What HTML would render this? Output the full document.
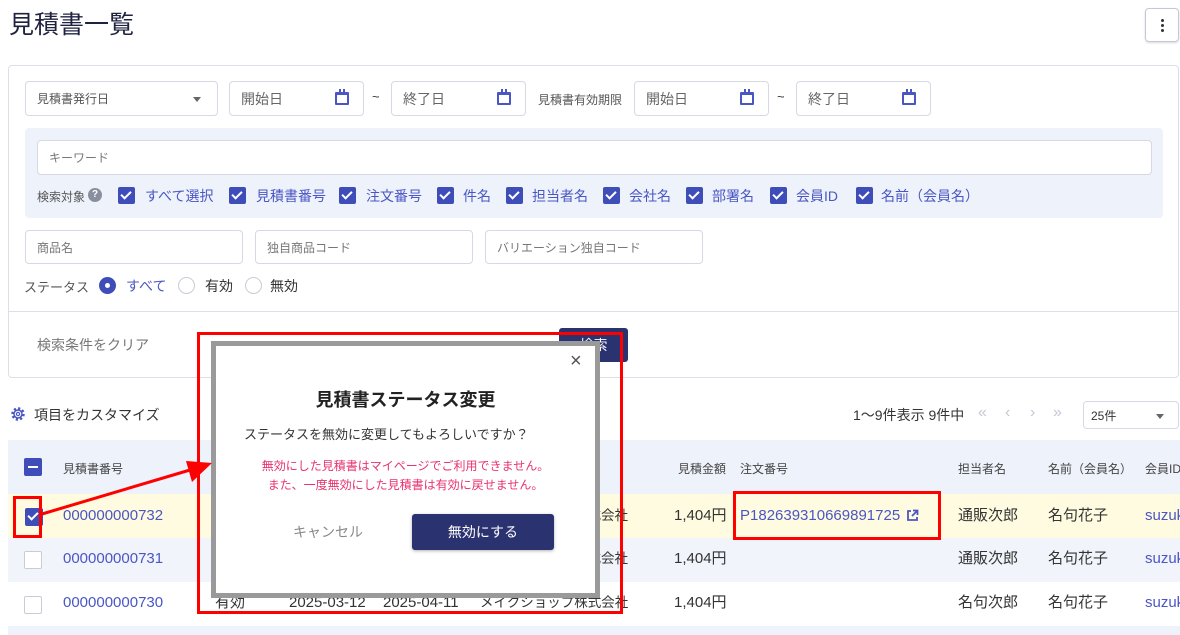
<!DOCTYPE html>
<html><head><meta charset="utf-8"><style>
*{box-sizing:border-box;margin:0;padding:0}
body{width:1180px;height:635px;overflow:hidden;background:#fff;font-family:"Liberation Sans","Noto Sans CJK JP",sans-serif;color:#333;position:relative}
.a{position:absolute;white-space:nowrap}
.inp{position:absolute;border:1px solid #d6d9e4;border-radius:4px;background:#fff;font-size:13px;color:#777;padding-left:11px;display:flex;align-items:center}
.big{font-size:14px;color:#666}
.cal{position:absolute;right:14px;top:10px;width:14px;height:13px;border:2px solid #4a56c4;border-top-width:3px;border-radius:1px}
.cal:before,.cal:after{content:"";position:absolute;top:-6px;width:2px;height:4px;background:#4a56c4}
.cal:before{left:2px}.cal:after{right:2px}
.cb{position:absolute;width:17px;height:17px;background:#3f4db8;border-radius:2px}
.cb:after{content:"";position:absolute;left:5px;top:2px;width:4px;height:8px;border:solid #fff;border-width:0 2px 2px 0;transform:rotate(45deg)}
.cbl{position:absolute;font-size:14px;color:#4a56c4;white-space:nowrap}
.ecb{position:absolute;width:17px;height:17px;border:1px solid #c9ccd6;border-radius:2px;background:#fff}
.td{position:absolute;font-size:15px;line-height:20px;color:#333;white-space:nowrap}
.th{position:absolute;font-size:12px;color:#444;white-space:nowrap}
.lnk{color:#4a56c4}
</style></head><body>
<div class="a" style="left:9px;top:5px;font-size:25px;color:#1f2340">見積書一覧</div>
<div class="a" style="left:1145px;top:8px;width:34px;height:34px;border:1px solid #c5c8d4;border-radius:4px;box-shadow:0 1px 2px rgba(0,0,0,.15)">
<div style="position:absolute;left:15px;top:10px;width:3px;height:3px;background:#333;border-radius:50%;box-shadow:0 5px 0 #333,0 10px 0 #333"></div></div>

<div class="a" style="left:8px;top:65px;width:1171px;height:313px;border:1px solid #dcdfe8;border-radius:4px"></div>
<div class="inp" style="left:25px;top:81px;width:193px;height:35px;color:#555;font-size:12px">見積書発行日<span style="position:absolute;right:16px;top:15px;border:4px solid transparent;border-top:5px solid #666"></span></div>
<div class="inp big" style="left:229px;top:81px;width:135px;height:35px">開始日<div class="cal"></div></div>
<div class="a" style="left:372px;top:89px;font-size:13px">~</div>
<div class="inp big" style="left:391px;top:81px;width:135px;height:35px">終了日<div class="cal"></div></div>
<div class="a" style="left:538px;top:91px;font-size:12px;color:#555">見積書有効期限</div>
<div class="inp big" style="left:634px;top:81px;width:135px;height:35px">開始日<div class="cal"></div></div>
<div class="a" style="left:777px;top:89px;font-size:13px">~</div>
<div class="inp big" style="left:796px;top:81px;width:135px;height:35px">終了日<div class="cal"></div></div>

<div class="a" style="left:25px;top:128px;width:1138px;height:90px;background:#eef2fa;border-radius:4px"></div>
<div class="inp" style="left:37px;top:140px;width:1115px;height:35px;font-size:12px">キーワード</div>
<div class="a" style="left:37px;top:188px;font-size:12px;color:#555">検索対象</div>
<div class="a" style="left:88px;top:188px;width:14px;height:14px;border-radius:50%;background:#8a8fa0;color:#fff;font-size:10px;font-weight:bold;text-align:center;line-height:14px">?</div>
<div class="cb" style="left:118px;top:187px"></div><div class="cbl" style="left:145px;top:186px">すべて選択</div>
<div class="cb" style="left:229px;top:187px"></div><div class="cbl" style="left:256px;top:186px">見積書番号</div>
<div class="cb" style="left:339px;top:187px"></div><div class="cbl" style="left:366px;top:186px">注文番号</div>
<div class="cb" style="left:437px;top:187px"></div><div class="cbl" style="left:463px;top:186px">件名</div>
<div class="cb" style="left:506px;top:187px"></div><div class="cbl" style="left:532px;top:186px">担当者名</div>
<div class="cb" style="left:603px;top:187px"></div><div class="cbl" style="left:629px;top:186px">会社名</div>
<div class="cb" style="left:686px;top:187px"></div><div class="cbl" style="left:712px;top:186px">部署名</div>
<div class="cb" style="left:770px;top:187px"></div><div class="cbl" style="left:796px;top:186px">会員ID</div>
<div class="cb" style="left:856px;top:187px"></div><div class="cbl" style="left:881px;top:186px">名前（会員名）</div>

<div class="inp" style="left:25px;top:230px;width:218px;height:34px;font-size:12px">商品名</div>
<div class="inp" style="left:255px;top:230px;width:218px;height:34px;font-size:12px">独自商品コード</div>
<div class="inp" style="left:485px;top:230px;width:218px;height:34px;font-size:12px">バリエーション独自コード</div>
<div class="a" style="left:24px;top:277px;font-size:13px;color:#555">ステータス</div>
<div class="a" style="left:99px;top:277px;width:17px;height:17px;border-radius:50%;background:#3f4db8"><div style="position:absolute;left:6px;top:6px;width:5px;height:5px;border-radius:50%;background:#fff"></div></div>
<div class="a" style="left:126px;top:276px;font-size:14px;color:#4a56c4">すべて</div>
<div class="a" style="left:178px;top:277px;width:17px;height:17px;border-radius:50%;border:1px solid #c9ccd6"></div>
<div class="a" style="left:205px;top:276px;font-size:14px">有効</div>
<div class="a" style="left:245px;top:277px;width:17px;height:17px;border-radius:50%;border:1px solid #c9ccd6"></div>
<div class="a" style="left:270px;top:276px;font-size:14px">無効</div>
<div class="a" style="left:9px;top:311px;width:1170px;height:1px;background:#dcdfe8"></div>
<div class="a" style="left:37px;top:335px;font-size:14px;color:#777">検索条件をクリア</div>
<div class="a" style="left:559px;top:328px;width:69px;height:34px;background:#2b3270;border-radius:3px;color:#fff;font-size:14px;text-align:center;line-height:34px">検索</div>

<svg class="a" style="left:10px;top:406px" width="16" height="16" viewBox="0 0 16 16"><circle cx="8" cy="8" r="5.5" fill="none" stroke="#4a56c4" stroke-width="2.5" stroke-dasharray="2.2 2.1"/><circle cx="8" cy="8" r="4" fill="none" stroke="#4a56c4" stroke-width="1.5"/><circle cx="8" cy="8" r="1.6" fill="none" stroke="#4a56c4" stroke-width="1.2"/></svg>
<div class="a" style="left:34px;top:405px;font-size:14px">項目をカスタマイズ</div>
<div class="a" style="left:853px;top:405px;font-size:14px">1〜9件表示 9件中</div>
<div class="a" style="left:978px;top:404px;font-size:16px;color:#c4c8d6">«</div>
<div class="a" style="left:1005px;top:404px;font-size:16px;color:#c4c8d6">‹</div>
<div class="a" style="left:1030px;top:404px;font-size:16px;color:#c4c8d6">›</div>
<div class="a" style="left:1053px;top:404px;font-size:16px;color:#c4c8d6">»</div>
<div class="inp" style="left:1083px;top:401px;width:96px;height:28px;color:#333;font-size:12px;padding-left:7px">25件<span style="position:absolute;right:14px;top:12px;border:4px solid transparent;border-top:5px solid #666"></span></div>

<div class="a" style="left:8px;top:440px;width:1172px;height:54px;background:#eef2fa"></div>
<div class="a" style="left:8px;top:494px;width:1172px;height:44px;background:#fffbe0"></div>
<div class="a" style="left:8px;top:538px;width:1172px;height:44px;background:#f1f4fb"></div>
<div class="a" style="left:8px;top:626px;width:1172px;height:9px;background:#eef2fa"></div>
<div class="a" style="left:24px;top:458px;width:18px;height:18px;background:#3f4db8;border-radius:2px"><div style="position:absolute;left:4px;top:8px;width:10px;height:2px;background:#fff"></div></div>
<div class="th" style="left:63px;top:460px">見積書番号</div>
<div class="th" style="left:678px;top:460px">見積金額</div>
<div class="th" style="left:740px;top:460px">注文番号</div>
<div class="th" style="left:958px;top:460px">担当者名</div>
<div class="th" style="left:1048px;top:460px">名前（会員名）</div>
<div class="th" style="left:1145px;top:460px">会員ID</div>

<div class="cb" style="left:25px;top:508px;width:18px;height:18px"></div>
<div class="td lnk" style="left:63px;top:506px">000000000732</div>
<div class="ecb" style="left:24px;top:551px;width:18px;height:18px"></div>
<div class="td lnk" style="left:63px;top:549px">000000000731</div>
<div class="ecb" style="left:24px;top:596px;width:18px;height:18px"></div>
<div class="td lnk" style="left:63px;top:593px">000000000730</div>
<div class="td" style="left:215px;top:593px">有効</div>
<div class="td" style="left:289px;top:593px">2025-03-12</div>
<div class="td" style="left:383px;top:593px">2025-04-11</div>
<div class="td" style="left:480px;top:593px;font-size:13.5px">メイクショップ株式会社</div>
<div class="td" style="left:574px;top:506px;font-size:13.5px">株式会社</div>
<div class="td" style="left:574px;top:549px;font-size:13.5px">株式会社</div>
<div class="td" style="left:674px;top:506px">1,404円</div><div class="td" style="left:674px;top:549px">1,404円</div><div class="td" style="left:674px;top:593px">1,404円</div>
<div class="td lnk" style="left:740px;top:506px">P182639310669891725</div>
<svg class="a" style="left:906px;top:509px" width="13" height="13" viewBox="0 0 13 13"><path d="M5 2H2v9h9V8M7 1.5h4.5V6M11.5 1.5L6 7" fill="none" stroke="#4a56c4" stroke-width="1.8"/></svg>
<div class="td" style="left:958px;top:506px">通販次郎</div><div class="td" style="left:958px;top:549px">通販次郎</div><div class="td" style="left:958px;top:593px">名句次郎</div>
<div class="td" style="left:1048px;top:506px">名句花子</div><div class="td" style="left:1048px;top:549px">名句花子</div><div class="td" style="left:1048px;top:593px">名句花子</div>
<div class="td lnk" style="left:1145px;top:506px">suzuki</div><div class="td lnk" style="left:1145px;top:549px">suzuki</div><div class="td lnk" style="left:1145px;top:593px">suzuki</div>

<!-- modal -->
<div class="a" style="left:211px;top:341px;width:389px;height:257px;background:#fff;border:5px solid #9a9a9a"></div>
<div class="a" style="left:570px;top:350px;font-size:20px;color:#555">×</div>
<div class="a" style="left:211px;top:386px;width:389px;text-align:center;font-size:18px;font-weight:bold;color:#222">見積書ステータス変更</div>
<div class="a" style="left:244px;top:424px;font-size:13px;color:#333">ステータスを無効に変更してもよろしいですか？</div>
<div class="a" style="left:211px;top:457px;width:389px;text-align:center;font-size:12px;color:#e8336e;line-height:19px">無効にした見積書はマイページでご利用できません。<br>また、一度無効にした見積書は有効に戻せません。</div>
<div class="a" style="left:293px;top:522px;font-size:14px;color:#888">キャンセル</div>
<div class="a" style="left:412px;top:514px;width:142px;height:36px;background:#2b3270;border-radius:3px;color:#fff;font-size:14px;text-align:center;line-height:36px;box-shadow:0 1px 3px rgba(0,0,0,.3)">無効にする</div>

<!-- annotations -->
<div class="a" style="left:197px;top:332px;width:426px;height:282px;border:3px solid #f00"></div>
<div class="a" style="left:13px;top:496px;width:29px;height:42px;border:3px solid #f00"></div>
<div class="a" style="left:733px;top:491px;width:208px;height:49px;border:3px solid #f00"></div>
<svg class="a" style="left:0;top:0" width="1180" height="635"><line x1="42" y1="514" x2="190" y2="470" stroke="#f00" stroke-width="3"/><polygon points="212,463 186,461 192,482" fill="#f00"/></svg>
</body></html>
